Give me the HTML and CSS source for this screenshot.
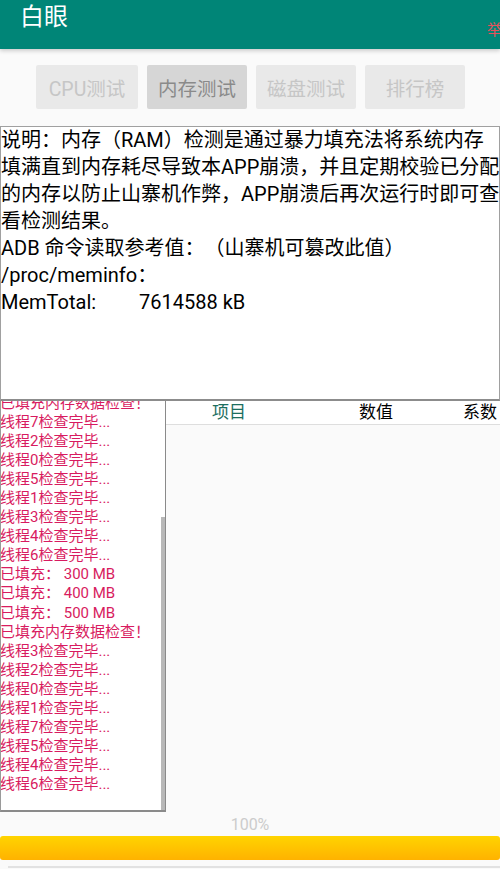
FILE: index.html
```html
<!DOCTYPE html>
<html lang="zh">
<head>
    <meta charset="UTF-8">
    <meta name="viewport" content="width=device-width, initial-scale=1.0">
    <title>白眼</title>
    <link rel="stylesheet" href="styles.css">
</head>
<body>
    <header class="app-bar">
        <h1 class="app-title">白眼</h1>
        <span class="report">举报</span>
    </header>

    <nav class="tabs">
        <button class="tab">CPU测试</button>
        <button class="tab active">内存测试</button>
        <button class="tab">磁盘测试</button>
        <button class="tab">排行榜</button>
    </nav>

    <div class="info-box">
        <p class="info-text">说明：内存（RAM）检测是通过暴力填充法将系统内存<br>填满直到内存耗尽导致本APP崩溃，并且定期校验已分配<br>的内存以防止山寨机作弊，APP崩溃后再次运行时即可查<br>看检测结果。<br>ADB 命令读取参考值：（山寨机可篡改此值）<br>/proc/meminfo：<br><span class="mem-label">MemTotal:</span>7614588 kB</p>
    </div>

    <div class="result-area">
        <div class="log-box">
            <ul class="log-list" id="log-list"></ul>
            <div class="scroll-thumb"></div>
        </div>
        <div class="score-table">
            <div class="score-head">
                <span class="col-item">项目</span>
                <span>数值</span>
                <span>系数</span>
            </div>
        </div>
    </div>

    <div class="progress-label">100%</div>
    <div class="progress-bar"><div class="progress-fill" style="width: 100%"></div></div>
    <div class="bottom-line"></div>

<script>
    // 日志内容
    const logs = [
        "已填充内存数据检查！",
        "线程7检查完毕...",
        "线程2检查完毕...",
        "线程0检查完毕...",
        "线程5检查完毕...",
        "线程1检查完毕...",
        "线程3检查完毕...",
        "线程4检查完毕...",
        "线程6检查完毕...",
        "已填充： 300 MB",
        "已填充： 400 MB",
        "已填充： 500 MB",
        "已填充内存数据检查！",
        "线程3检查完毕...",
        "线程2检查完毕...",
        "线程0检查完毕...",
        "线程1检查完毕...",
        "线程7检查完毕...",
        "线程5检查完毕...",
        "线程4检查完毕...",
        "线程6检查完毕..."
    ];

    const list = document.getElementById("log-list");
    logs.forEach(text => {
        const li = document.createElement("li");
        li.textContent = text;
        list.appendChild(li);
    });
</script>
</body>
</html>
```

FILE: styles.css
```css
/* 基本样式 */
body {
    margin: 0;
    background-color: #fafafa;
    font-family: Roboto, "Noto Sans CJK SC", sans-serif;
    color: #000;
    overflow: hidden;
    text-spacing-trim: space-all;
}

.app-bar {
    height: 49px;
    background-color: #008577;
    display: flex;
    align-items: flex-start;
    box-shadow: 0 2px 4px rgba(0, 0, 0, 0.18);
    overflow: hidden;
    position: relative;
}

.app-title {
    margin: 3px 0 0 20px;
    font-size: 24px;
    font-weight: normal;
    color: #fff;
    line-height: 28px;
}

.report {
    margin-left: auto;
    margin-right: -17px;
    margin-top: 20px;
    font-size: 15px;
    line-height: 20px;
    color: #e5525c;
    white-space: nowrap;
}

/* 选项按钮 */
.tabs {
    display: flex;
    justify-content: center;
    gap: 9px;
    padding: 16px 0 0 0;
    margin-left: 1px;
}

.tab {
    width: 100px;
    height: 44px;
    border: none;
    border-radius: 2px;
    background-color: #e9e9e9;
    color: #c6c6c6;
    font-family: Roboto, "Noto Sans CJK SC", sans-serif;
    font-size: 19.5px;
    padding: 0;
}

.tab:first-child {
    width: 102px;
}

.tab.active {
    background-color: #d6d6d6;
    color: #8a8a8a;
}

/* 说明框 */
.info-box {
    margin-top: 17px;
    height: 272px;
    background-color: #fff;
    border: 1px solid #a0a0a0;
    border-bottom: 2px solid #8c8c8c;
}

.info-text {
    margin: 0;
    font-size: 20px;
    line-height: 27px;
    white-space: nowrap;
}

.mem-label {
    display: inline-block;
    width: 138px;
}

/* 日志和表格 */
.result-area {
    display: flex;
    height: 411px;
}

.log-box {
    width: 164px;
    background-color: #fff;
    border-left: 1px solid #9a9a9a;
    border-right: 1px solid #8a8a8a;
    border-bottom: 2px solid #8a8a8a;
    overflow: hidden;
    position: relative;
}

.log-list {
    list-style: none;
    margin: -7px 0 0 -1px;
    padding: 0;
    font-size: 15px;
    line-height: 19.05px;
    color: #d81b60;
    white-space: nowrap;
}

.scroll-thumb {
    position: absolute;
    right: 0;
    top: 116px;
    bottom: 0;
    width: 4px;
    background-color: #b8b8b8;
}

.score-table {
    flex: 1;
}

.score-head {
    display: grid;
    grid-template-columns: 126px 168px 1fr;
    height: 23px;
    background-color: #fff;
    border-bottom: 1px solid #dedede;
    font-size: 17px;
    line-height: 23px;
    text-align: center;
}

.col-item {
    color: #1d6e60;
}

/* 进度 */
.progress-label {
    margin-top: 3px;
    text-align: center;
    font-size: 16px;
    line-height: 20px;
    color: #cccccc;
}

.progress-bar {
    margin-top: 1px;
    height: 24px;
}

.progress-fill {
    height: 100%;
    border-radius: 3px;
    background: linear-gradient(#ffd400, #ffb200);
}

.bottom-line {
    margin: 6px 0 0 8px;
    border-top: 2px solid #e2e2e2;
}
```
